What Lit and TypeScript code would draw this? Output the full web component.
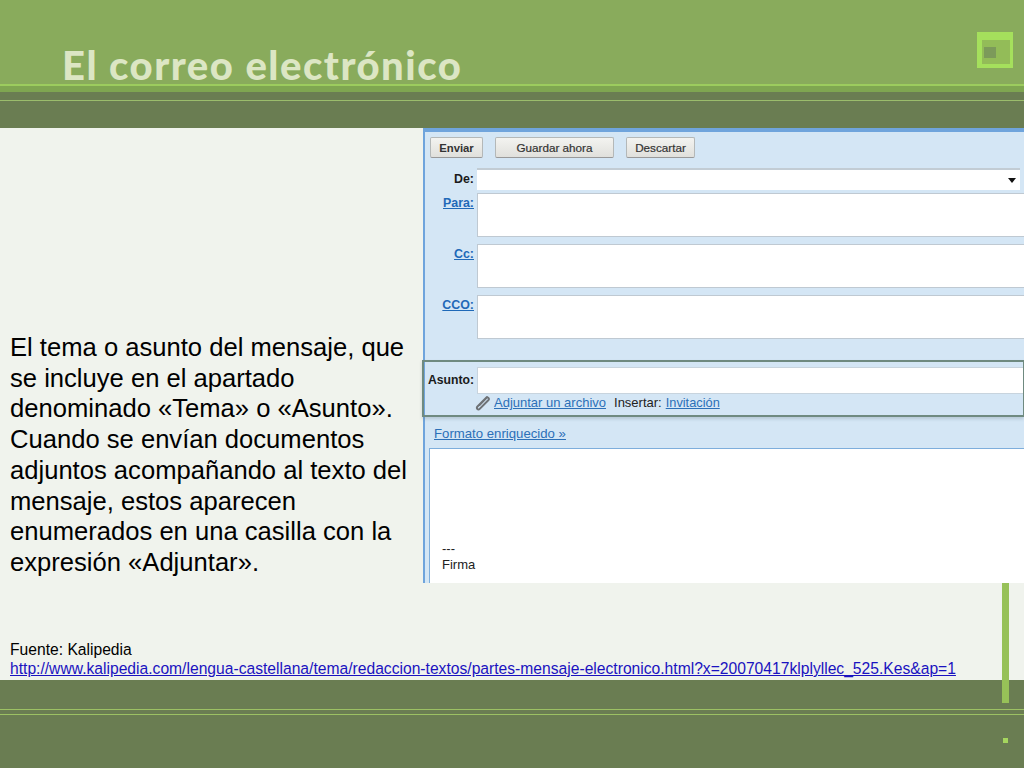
import { LitElement, html, css } from "lit";
import { customElement } from "lit/decorators.js";

@customElement("app-root")
export class AppRoot extends LitElement {
  static styles = css`
    :host { display: block; width: 1024px; height: 768px; position: relative; overflow: hidden; background: #f0f3ed; font-family: "Liberation Sans", Arial, sans-serif; color: #000; }
    .head { height: 128px; background: #6a7d52; display: flex; flex-direction: column; }
    .head-top { height: 92px; box-sizing: border-box; background: #7fa651; display: flex; flex-direction: column; }
    .title-row { height: 84px; box-sizing: border-box; flex: none; display: flex; align-items: flex-end; padding: 0 11px 0 62px; background: #89ab5c; }
    .title { font-family: Lato, sans-serif; font-weight: 900; font-size: 40px; line-height: 48px; letter-spacing: 1.5px; color: #dce6c4; margin-bottom: -5px; }
    .logo { position: absolute; left: 977px; top: 32px; width: 36px; height: 36px; box-sizing: border-box; background: #a5e05c; padding: 8px 3px 4px 5px; }
    .logo-in { width: 100%; height: 100%; background: #93bc58; padding: 7px 0 0 2px; box-sizing: border-box; }
    .logo-core { width: 12px; height: 11px; background: #7c9a5a; }
    .line-a { height: 2px; background: #9ccc5e; flex: none; }
    .head-mid { height: 9px; box-sizing: border-box; border-bottom: 1px solid #9bbd6c; }
    .main { height: 455px; display: grid; grid-template-columns: 423px 601px; }
    .text { font-size: 25.6px; line-height: 30.7px; padding: 204px 12px 0 10px; }
    .mail { box-sizing: border-box; background: #d4e6f5; border-top: 4px solid #6fa4dc; border-left: 2px solid #6fa4dc; height: 455px; display: flex; flex-direction: column; font-size: 13px; position: relative; }
    .bar { display: flex; gap: 12px; padding: 5px 0 0 5px; height: 21px; }
    .btn { height: 21px; box-sizing: border-box; background: linear-gradient(#f3f3f0, #e0e0dc); border: 1px solid #b4b8b8; border-bottom-color: #999; border-radius: 2px; display: flex; align-items: center; justify-content: center; color: #333; font-size: 11.7px; -webkit-text-stroke: 0.2px #333; }
    .b1 { width: 53px; font-weight: 700; font-size: 11.3px; -webkit-text-stroke: 0; }
    .b2 { width: 119px; }
    .b3 { width: 69px; }
    .row { display: grid; grid-template-columns: 49px 1fr; column-gap: 3px; }
    .lbl { text-align: right; font-weight: 700; font-size: 12.4px; line-height: 16px; color: #1a1a1a; }
    .lnk { color: #1f69b8; text-decoration: underline; }
    .de { margin-top: 10px; height: 20px; }
    .de .lbl { line-height: 22px; }
    .select { background: #fff; border-top: 2px solid #c2ccd4; box-sizing: border-box; margin-right: 4px; display: flex; justify-content: flex-end; align-items: center; padding-right: 4px; }
    .arrow { width: 0; height: 0; border-left: 4px solid transparent; border-right: 4px solid transparent; border-top: 5px solid #111; }
    .addr { height: 44px; margin-top: 7px; }
    .addr.first { margin-top: 5px; }
    .addr .lbl { line-height: 20px; }
    .field { background: #fff; border: 1px solid #bfc9d2; border-right: none; box-sizing: border-box; }
    .subject { margin-top: 21px; height: 57px; box-sizing: border-box; border: 2px solid #6f8a80; border-right-width: 1px; margin-left: -3px; box-shadow: 0 2px 3px rgba(90, 110, 120, 0.25); padding-top: 5px; }
    .subject .row { grid-template-columns: 50px 1fr; height: 24px; }
    .subject .lbl { line-height: 27px; text-align: right; white-space: nowrap; font-size: 12.2px; }
    .subject .field { border-color: #c8d4de; }
    .attach { display: flex; align-items: center; height: 22px; margin-top: 1px; padding-left: 50px; color: #222; line-height: 22px; white-space: nowrap; font-size: 13px; }
    .attach svg { flex: none; width: 16px; height: 17px; margin-right: 4px; }
    .attach .lnk { color: #2c70b8; }
    .ins { margin-left: 8px; margin-right: 4px; }
    .inv { font-size: 12.8px; }
    .fmt { margin: 9px 0 0 9px; height: 16px; line-height: 16px; color: #2c70b8; text-decoration: underline; font-size: 13.2px; }
    .editor { flex: 1; background: #fff; border: 1px solid #7eaedc; border-right: none; border-bottom: none; margin: 6px 0 0 4px; display: flex; flex-direction: column; justify-content: flex-end; padding: 0 0 10px 12px; font-size: 13px; line-height: 16px; color: #222; }
    .src { font-size: 15.65px; line-height: 19px; padding: 57px 0 0 10px; height: 97px; box-sizing: border-box; }
    .src a { color: #1a12c0; text-decoration: underline; display: block; white-space: nowrap; }
    .foot { height: 88px; background: #6a7d52; display: flex; flex-direction: column; }
    .foot i { display: block; height: 1px; background: #9cc163; flex: none; margin-top: 29px; }
    .foot i + i { margin-top: 4px; }
    .vbar { position: absolute; left: 1002px; top: 583px; width: 7px; height: 120px; background: #97c158; }
    .dot { position: absolute; left: 1003px; top: 738px; width: 5px; height: 5px; background: #a5d65e; }
  `;

  render() {
    return html`
      <div class="head">
        <div class="head-top">
          <div class="title-row">
            <div class="title">El correo electrónico</div>
          </div>
          <div class="line-a"></div>
        </div>
        <div class="head-mid"></div>
      </div>
      <div class="main">
        <div class="text">El tema o asunto del mensaje, que se incluye en el apartado denominado «Tema» o «Asunto». Cuando se envían documentos adjuntos acompañando al texto del mensaje, estos aparecen enumerados en una casilla con la expresión «Adjuntar».</div>
        <div class="mail">
          <div class="bar">
            <div class="btn b1">Enviar</div>
            <div class="btn b2">Guardar ahora</div>
            <div class="btn b3">Descartar</div>
          </div>
          <div class="row de">
            <div class="lbl">De:</div>
            <div class="select"><div class="arrow"></div></div>
          </div>
          <div class="row addr first"><div class="lbl lnk">Para:</div><div class="field"></div></div>
          <div class="row addr"><div class="lbl lnk">Cc:</div><div class="field"></div></div>
          <div class="row addr"><div class="lbl lnk">CCO:</div><div class="field"></div></div>
          <div class="subject">
            <div class="row"><div class="lbl">Asunto:</div><div class="field"></div></div>
            <div class="attach">
              <svg viewBox="0 0 16 17" fill="none" stroke="#6e7276" stroke-width="2" stroke-linecap="round"><path d="M13 2 3.5 11.5c-1.6 1.8 .6 4 2.2 2.4L14.5 5c1.2-1.4-.8-3.4-2-2.2L5.5 10"/></svg>
              <span class="lnk">Adjuntar un archivo</span>
              <span class="ins">Insertar:</span>
              <span class="lnk inv">Invitación</span>
            </div>
          </div>
          <div class="fmt">Formato enriquecido »</div>
          <div class="editor"><div>---</div><div>Firma</div></div>
        </div>
      </div>
      <div class="src">
        Fuente: Kalipedia
        <a>http://www.kalipedia.com/lengua-castellana/tema/redaccion-textos/partes-mensaje-electronico.html?x=20070417klplyllec_525.Kes&ap=1</a>
      </div>
      <div class="foot"><i></i><i></i></div>
      <div class="logo"><div class="logo-in"><div class="logo-core"></div></div></div>
      <div class="vbar"></div>
      <div class="dot"></div>
    `;
  }
}
